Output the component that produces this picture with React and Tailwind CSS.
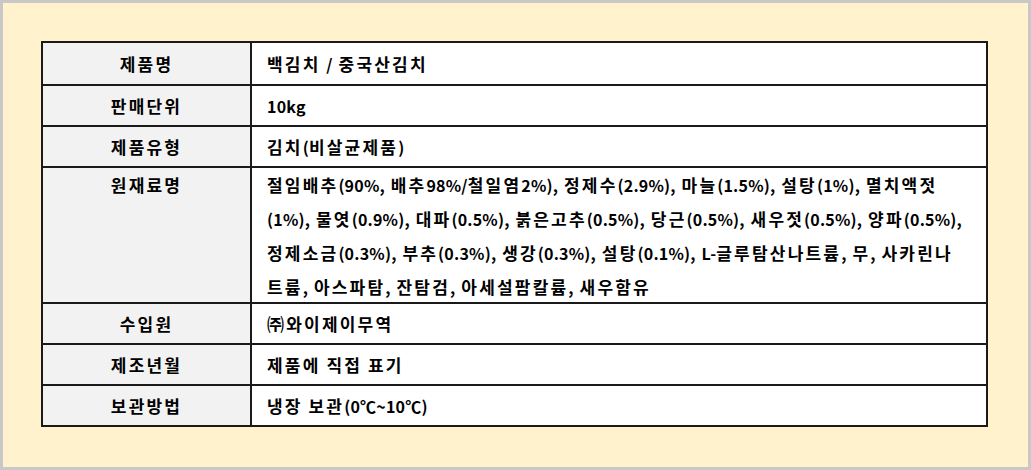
import React from "react";

const rows = [
  { label: "제품명", value: ["백김치 / 중국산김치"] },
  { label: "판매단위", value: ["10kg"] },
  { label: "제품유형", value: ["김치(비살균제품)"] },
  {
    label: "원재료명",
    value: [
      "절임배추(90%, 배추98%/철일염2%), 정제수(2.9%), 마늘(1.5%), 설탕(1%), 멸치액젓",
      "(1%), 물엿(0.9%), 대파(0.5%), 붉은고추(0.5%), 당근(0.5%), 새우젓(0.5%), 양파(0.5%),",
      "정제소금(0.3%), 부추(0.3%), 생강(0.3%), 설탕(0.1%), L-글루탐산나트륨, 무, 사카린나",
      "트륨, 아스파탐, 잔탐검, 아세설팜칼륨, 새우함유",
    ],
    tall: true,
  },
  { label: "수입원", value: ["㈜와이제이무역"] },
  { label: "제조년월", value: ["제품에 직접 표기"] },
  { label: "보관방법", value: ["냉장 보관(0℃~10℃)"] },
];

function Txt({ s }) {
  const parts = s.split(/([\u3131-\u318E\uAC00-\uD7A3\u3200-\u32FF]+)/);
  return (
    <>
      {parts.map((p, k) =>
        /[\u3131-\u318E\uAC00-\uD7A3\u3200-\u32FF]/.test(p) ? (
          <span key={k} className="text-[17px] tracking-[2.2px]">
            {p}
          </span>
        ) : (
          <span key={k}>{p}</span>
        )
      )}
    </>
  );
}

export default function App() {
  return (
    <div
      className="w-[1031px] h-[470px] border-[3px] border-[#c8c8c8] bg-[#fff2cc] pt-[38px] pl-[38px]"
      style={{ fontFamily: '"Noto Sans CJK KR", "Noto Sans", sans-serif' }}
    >
      <div className="w-[947px] border-2 border-[#1a1a1a] bg-white text-[16px] tracking-[0.2px] [word-spacing:2px] font-bold text-black">
        {rows.map((r, i) => (
          <div
            key={i}
            className={
              "flex " +
              (i > 0 ? "border-t-2 border-[#1a1a1a] " : "") +
              (r.tall ? "h-[136px]" : "h-[41px]")
            }
          >
            <div
              className={
                "w-[209px] shrink-0 bg-[#f2f2f2] border-r-2 border-[#1a1a1a] flex justify-center " +
                (r.tall ? "items-start leading-[33px]" : "items-center leading-[24px]")
              }
            >
              <Txt s={r.label} />
            </div>
            <div
              className={
                "flex-1 pl-[15px] flex flex-col " +
                (r.tall ? "justify-start leading-[33px]" : "justify-center leading-[24px]")
              }
            >
              {r.value.map((line, j) => (
                <div key={j} className="whitespace-nowrap">
                  <Txt s={line} />
                </div>
              ))}
            </div>
          </div>
        ))}
      </div>
    </div>
  );
}
